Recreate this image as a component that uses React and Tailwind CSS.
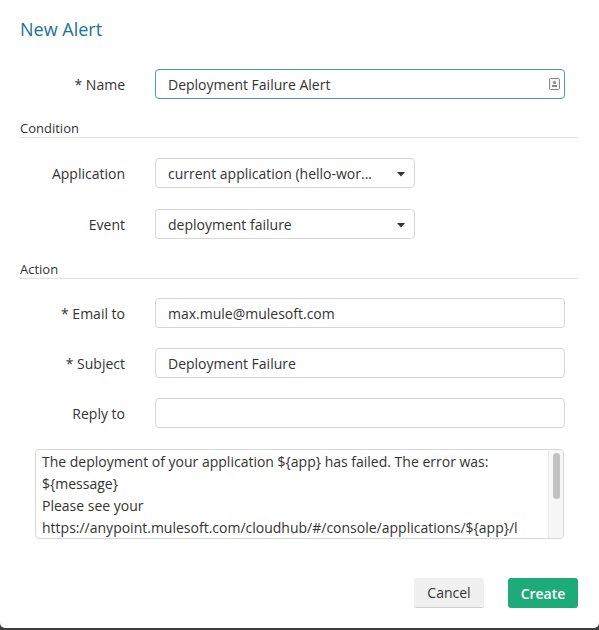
import React from "react";

const font = { fontFamily: '"Open Sans", "Noto Sans", sans-serif' };

function Label({ children }) {
  return (
    <div className="w-[105px] text-right text-[14px] text-[#333]">{children}</div>
  );
}

function Caret() {
  return (
    <svg width="8" height="5" viewBox="0 0 8 5" className="absolute right-[9px] top-[13px]">
      <path d="M0 0 L8 0 L4 4.5 Z" fill="#333" />
    </svg>
  );
}

function Select({ value }) {
  return (
    <div className="relative w-[260px] h-[30px] border border-[#d6d6d6] rounded-[4px] flex items-center pl-[12px] text-[14px] text-[#333]">
      {value}
      <Caret />
    </div>
  );
}

function Input({ value, focused, icon }) {
  return (
    <div
      className={
        "relative w-[410px] h-[30px] rounded-[4px] flex items-center pl-[12px] text-[14px] text-[#333] border " +
        (focused ? "border-[#4a9bb0]" : "border-[#d6d6d6]")
      }
    >
      {value}
      {icon && (
        <svg width="11" height="12" viewBox="0 0 11 12" className="absolute right-[4px] top-[8px]">
          <rect x="0.5" y="0.5" width="10" height="11" rx="1" fill="#f4f4f4" stroke="#888" />
          <circle cx="5.5" cy="4.5" r="1.6" fill="#888" />
          <rect x="3" y="7" width="5" height="2" fill="#888" />
        </svg>
      )}
    </div>
  );
}

function Row({ label, children, className = "" }) {
  return (
    <div className={"flex items-center gap-[30px] " + className}>
      <Label>{label}</Label>
      {children}
    </div>
  );
}

function Section({ title, className = "" }) {
  return (
    <div className={"text-[13px] text-[#333] border-b border-[#e2e2e2] mr-[1px] leading-[18px] " + className}>
      {title}
    </div>
  );
}

export default function App() {
  return (
    <div className="w-[599px] h-[630px] bg-[#3d3d3d]" style={font}>
      <div className="w-[599px] h-[628px] bg-white rounded-b-[5px] px-[20px] pt-[17px] flex flex-col">
        <div className="text-[18px] leading-[24px] text-[#19729a]">New Alert</div>
        <Row label="* Name" className="mt-[28px]">
          <Input value="Deployment Failure Alert" focused icon />
        </Row>
        <Section title="Condition" className="mt-[20px]" />
        <Row label="Application" className="mt-[20px]">
          <Select value="current application (hello-wor..." />
        </Row>
        <Row label="Event" className="mt-[21px]">
          <Select value="deployment failure" />
        </Row>
        <Section title="Action" className="mt-[21px]" />
        <Row label="* Email to" className="mt-[19px]">
          <Input value="max.mule@mulesoft.com" />
        </Row>
        <Row label="* Subject" className="mt-[20px]">
          <Input value="Deployment Failure" />
        </Row>
        <Row label="Reply to" className="mt-[20px]">
          <Input value="" />
        </Row>
        <div className="mt-[21px] ml-[15px] w-[529px] h-[90px] border border-[#d6d6d6] rounded-[4px] flex overflow-hidden">
          <div className="flex-1 pl-[6px] pt-[1px] text-[14px] leading-[22px] text-[#333] whitespace-nowrap overflow-hidden">
            <div>The deployment of your application {"${app}"} has failed. The error was:</div>
            <div>{"${message}"}</div>
            <div>Please see your</div>
            <div>https://anypoint.mulesoft.com/cloudhub/#/console/applications/{"${app}"}/l</div>
          </div>
          <div className="w-[15px] bg-[#f7f7f7] border-l border-[#e8e8e8] flex justify-center pt-[3px]">
            <div className="w-[7px] h-[46px] rounded-full bg-[#c2c2c2]" />
          </div>
        </div>
        <div className="mt-[39px] flex justify-end gap-[24px] pr-[1px]">
          <button className="w-[70px] h-[30px] rounded-[3px] bg-[#f0f0f0] border-b border-[#d0d0d0] text-[14px] text-[#333]">
            Cancel
          </button>
          <button className="w-[70px] h-[30px] rounded-[3px] bg-[#1dab7a] text-[14px] font-semibold text-white">
            Create
          </button>
        </div>
      </div>
    </div>
  );
}
